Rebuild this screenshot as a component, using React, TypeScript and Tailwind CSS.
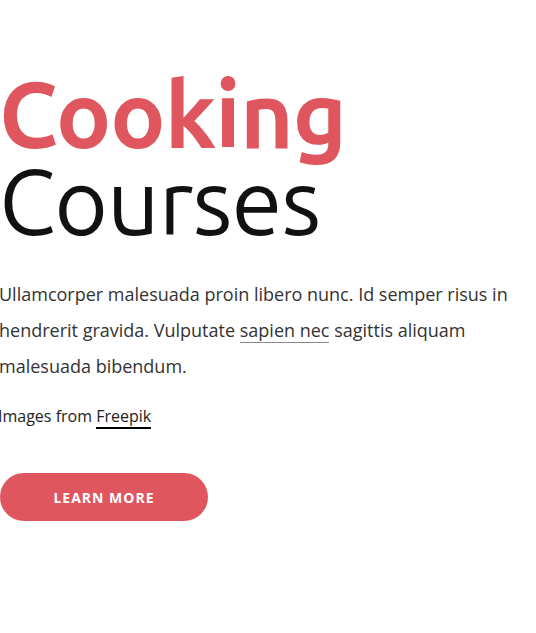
import React from 'react';

const App: React.FC = () => {
  return (
    <main className="min-h-screen bg-white font-['Open_Sans',sans-serif]">
      <section className="pt-[70px] pr-6">
        <h1 className="-ml-px text-[92px] leading-[87px] tracking-[-1px] font-['Ubuntu','Open_Sans',sans-serif]">
          <span className="block font-bold text-[#e0565e]">Cooking</span>
          <span className="block font-normal text-[#111111]">Courses</span>
        </h1>

        <p className="mt-8 -ml-px text-[18px] leading-[36px] text-[#333333]">
          Ullamcorper malesuada proin libero nunc. Id semper risus in hendrerit gravida. Vulputate{' '}
          <a href="#" className="border-b border-[#888888]">sapien nec</a> sagittis aliquam malesuada bibendum.
        </p>

        <p className="mt-5 -ml-[2px] text-[16px] leading-[24px] text-[#222222]">
          Images from <a href="#" className="border-b-2 border-black">Freepik</a>
        </p>

        <button className="mt-[45px] w-[208px] h-[48px] rounded-full bg-[#e0565e] text-white text-[14px] font-bold tracking-[1px] uppercase">
          Learn More
        </button>
      </section>
    </main>
  );
};

export default App;
